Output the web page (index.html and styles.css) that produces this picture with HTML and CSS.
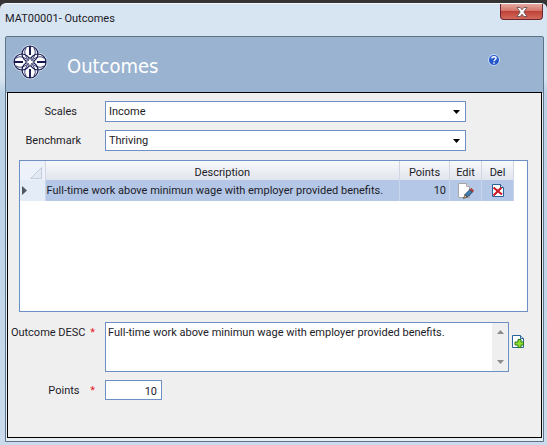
FILE: index.html
```html
<!DOCTYPE html>
<html lang="en">
<head>
<meta charset="utf-8">
<title>MAT00001- Outcomes</title>
<link rel="stylesheet" href="styles.css">
</head>
<body>
<main class="window">
  <header class="titlebar">
    <span class="title">MAT00001- Outcomes</span>
    <button class="close" type="button" aria-label="Close">
      <svg width="12" height="10" viewBox="0 0 12 10"><path d="M1 .5h3.2L6 2.8 7.800.5H11L7.800 5 11 9.500H7.800L6 7.200 4.200 9.500H1L4.200 5z" fill="#fff" stroke="#5c4a50" stroke-width=".8"/></svg>
    </button>
  </header>
  <div class="frame">
    <div class="banner">
      <svg class="logo" width="36" height="36" viewBox="0 0 36 36">
        <g fill="#fff" stroke="#e4ecf6" stroke-width="2.500">
          <circle cx="18" cy="10" r="8"/><circle cx="26" cy="18" r="8"/><circle cx="18" cy="26" r="8"/><circle cx="10" cy="18" r="8"/>
        </g>
        <g fill="none" stroke="#15184f" stroke-width="1.200">
          <circle cx="18" cy="10" r="8"/><circle cx="26" cy="18" r="8"/><circle cx="18" cy="26" r="8"/><circle cx="10" cy="18" r="8"/>
          <path d="M14 4Q10 10 18 18Q26 10 22 4M14 32Q10 26 18 18Q26 26 22 32M4 14Q10 10 18 18Q10 26 4 22M32 14Q26 10 18 18Q26 26 32 22" stroke-width=".8"/>
          <path d="M18 2V11M18 25V34M2 18H11M25 18H34" stroke-width="1.900"/>
        </g>
        <path d="M18 13l1.500 3.500L23 18l-3.500 1.500L18 23l-1.500-3.500L13 18l3.500-1.500z" fill="#fff" stroke="#15184f" stroke-width=".6"/>
      </svg>
      <h1>Outcomes</h1>
      <button class="icon-button" type="button" aria-label="Help">
        <svg width="12" height="12" viewBox="0 0 12 12"><circle cx="6" cy="6" r="5.500" fill="#2456cb" stroke="#c9defa"/><path d="M2 4.500A4.500 4.500 0 0 1 10 4.500Q6 2.500 2 4.500" fill="#6e9bee"/><path d="M4 4.600C4 2.200 8 2.200 8 4.400 8 5.800 6 5.800 6 7.300M6 8.300V9.700" fill="none" stroke="#fff" stroke-width="1.400"/></svg>
      </button>
    </div>
    <form class="panel">
      <div class="row row-select">
        <label class="label label-short" for="scales">Scales</label>
        <div class="select">
          <select id="scales"><option>Income</option></select>
          <svg width="7" height="4" viewBox="0 0 7 4"><path d="M0 0h7L3.500 4z"/></svg>
        </div>
      </div>
      <div class="row row-select">
        <label class="label" for="benchmark">Benchmark</label>
        <div class="select">
          <select id="benchmark"><option>Thriving</option></select>
          <svg width="7" height="4" viewBox="0 0 7 4"><path d="M0 0h7L3.500 4z"/></svg>
        </div>
      </div>
      <div class="list">
        <table>
          <colgroup><col class="col-mark"><col><col class="col-points"><col class="col-action"><col class="col-action"></colgroup>
          <thead>
            <tr>
              <th class="corner"><svg width="12" height="12" viewBox="0 0 12 12"><path d="M11.500.5v11H.5z" fill="#e3e9f3" stroke="#c3cddd"/></svg></th>
              <th>Description</th><th>Points</th><th>Edit</th><th>Del</th>
            </tr>
          </thead>
          <tbody>
            <tr>
              <td class="mark"><svg width="5" height="9" viewBox="0 0 5 9"><path d="M0 0l5 4.500L0 9z" fill="#505860"/></svg></td>
              <td>Full-time work above minimun wage with employer provided benefits.</td>
              <td class="number">10</td>
              <td class="action"><button class="icon-button" type="button" aria-label="Edit">
                <svg width="17" height="16" viewBox="0 0 17 16"><path d="M1.500.5h8l3 3v11h-11z" fill="#fff" stroke="#a8a6a4"/><path d="M9.500.5v3h3" fill="#e1e4ea" stroke="#a8a6a4"/><path d="M6.500 15.500l1.500-4 2.500 2.500z" fill="#e9b98a" stroke="#222" stroke-width=".6"/><path d="M8 11.500l5-5 2.500 2.500-5 5z" fill="#3f7fb8" stroke="#14233f" stroke-width=".8"/><path d="M13 6.500l1.300-1.300 2.500 2.500L15.500 9z" fill="#d2442c" stroke="#7a2418" stroke-width=".5"/></svg>
              </button></td>
              <td class="action"><button class="icon-button" type="button" aria-label="Delete">
                <svg width="12" height="13" viewBox="0 0 12 13"><path d="M.5.500H8.500l3 3v9H.5z" fill="#fff" stroke="#29629a"/><path d="M8.500.5v3h3" fill="#c9e0f5" stroke="#29629a"/><path d="M1.500 3.500l8.500 7M9.500 3.500l-8 8" stroke="#cb1720" stroke-width="2"/></svg>
              </button></td>
            </tr>
          </tbody>
        </table>
      </div>
      <div class="row row-desc">
        <label class="label label-required" for="desc">Outcome DESC <span class="star">*</span></label>
        <div class="memo">
          <textarea id="desc">Full-time work above minimun wage with employer provided benefits.</textarea>
          <div class="scroller">
            <svg width="7" height="4" viewBox="0 0 7 4"><path d="M0 4h7L3.500 0z"/></svg>
            <svg width="7" height="4" viewBox="0 0 7 4"><path d="M0 0h7L3.500 4z"/></svg>
          </div>
        </div>
        <button class="icon-button add" type="button" aria-label="Add">
          <svg width="12" height="13" viewBox="0 0 12 13"><path d="M.5.500H8.500l3 3v9H.5z" fill="#fff" stroke="#29629a"/><path d="M8.500.5v3h3" fill="#c9e0f5" stroke="#29629a"/><path d="M6 4.500h3v2.500h2.500v3H9v2.500H6V10H3V7h3z" fill="#8fe02c" stroke="#28791c"/></svg>
        </button>
      </div>
      <div class="row">
        <label class="label label-required label-points" for="points">Points <span class="star">*</span></label>
        <input class="points" id="points" type="text" value="10">
      </div>
    </form>
  </div>
</main>
</body>
</html>
```
FILE: styles.css
```css
* { box-sizing: border-box; }
body {
  margin: 0;
  padding-top: 3px;
  background: #343434;
  color: #1c1c28;
  font: 11px/14px Roboto, "Liberation Sans", sans-serif;
}
button, input, select, textarea { font: inherit; color: inherit; }
svg { display: block; }
.window {
  display: flex;
  flex-direction: column;
  min-height: calc(100vh - 3px);
  padding: 0 3px 3px 5px;
  border-top: 1px solid #f4f8fc;
  border-radius: 6px 6px 0 0;
  background: linear-gradient(#d7e4f1 0, #d7e4f1 74px, #b9d0e6 90px, #c9dbec 100%);
}
.titlebar {
  display: flex;
  justify-content: space-between;
  height: 32px;
}
.title { padding-top: 8px; }
.close {
  display: grid;
  place-items: center;
  width: 43px;
  height: 16px;
  margin-right: 1px;
  padding: 0;
  border: 1px solid #6b2630;
  border-top: 0;
  border-radius: 0 0 4px 4px;
  background: linear-gradient(#e6a99f, #d5756a 45%, #bd4338 50%, #d4695b);
}
.frame {
  display: flex;
  flex: 1;
  flex-direction: column;
  padding: 0 1px 3px;
  border: 1px solid #5f7387;
  border-radius: 2px 2px 0 0;
  background: linear-gradient(#9ab3d0 56px, #e6edf3 56px);
}
.banner {
  display: flex;
  align-items: center;
  height: 55px;
  padding: 0 42px 5px 5px;
}
h1 {
  flex: 1;
  margin: 7px 0 0 19px;
  color: #fff;
  font: 20px/24px "DejaVu Sans Condensed", "DejaVu Sans", sans-serif;
}
.icon-button {
  display: block;
  padding: 0;
  border: 0;
  background: none;
}
.banner .icon-button { margin-bottom: 4px; }
.panel {
  flex: 1;
  padding: 8px 13px 0 0;
  border: 1px solid #000;
  background: #efefef;
}
.row { display: flex; }
.label {
  flex: none;
  width: 97px;
  padding: 4px 24px 0 0;
  text-align: right;
  white-space: nowrap;
}
.label-short { padding-right: 28px; }
.label-required { padding-right: 10px; }
.star { margin-left: 2px; color: #e8202c; }
.label-points .star { margin-left: 8px; }
.row-select {
  margin-bottom: 8px;
  padding-right: 62px;
}
.select {
  position: relative;
  flex: 1;
}
.select select {
  display: block;
  width: 100%;
  height: 21px;
  padding: 1px 3px 0;
  border: 1px solid #6c8fc4;
  border-radius: 0;
  background: #fff;
  appearance: none;
}
.select svg {
  position: absolute;
  top: 9px;
  right: 6px;
  pointer-events: none;
}
.list {
  height: 152px;
  margin: 9px 0 10px 11px;
  padding-right: 13px;
  border: 1px solid #6c8fc4;
  background: #fff;
}
table {
  width: 100%;
  border-collapse: collapse;
  table-layout: fixed;
}
.col-mark { width: 25px; }
.col-points { width: 50px; }
.col-action { width: 32px; }
th {
  height: 19px;
  padding: 4px 0 0;
  border-right: 1px solid #d0d7e2;
  background: linear-gradient(#f8f9fc, #e0e4ec);
  font-weight: normal;
}
.corner { padding: 4px 3px 0 10px; background: #edf2fa; }
td {
  height: 21px;
  padding: 0 1px;
  border-right: 1px solid #c8d5eb;
  background: #b4c7e6;
  white-space: nowrap;
}
.mark { padding-left: 2px; background: #e4ecf7; }
.number { padding-right: 3px; text-align: right; }
.action .icon-button { margin: 0 auto; }
.row-desc { margin-bottom: 8px; }
.memo {
  display: flex;
  flex: 1;
  height: 50px;
  border: 1px solid #6c8fc4;
  background: #fff;
}
textarea {
  flex: 1;
  min-width: 0;
  padding: 3px 2px;
  border: 0;
  background: none;
  overflow: hidden;
  resize: none;
}
.scroller {
  display: flex;
  flex-direction: column;
  align-items: center;
  justify-content: space-between;
  width: 16px;
  padding: 7px 0;
  background: #efefef;
  fill: #8c8c8c;
}
.add {
  align-self: flex-start;
  margin: 13px 4px 0 3px;
}
.points {
  width: 57px;
  height: 20px;
  padding: 2px 4px 0;
  border: 1px solid #6c8fc4;
  background: #fff;
  text-align: right;
}
```
